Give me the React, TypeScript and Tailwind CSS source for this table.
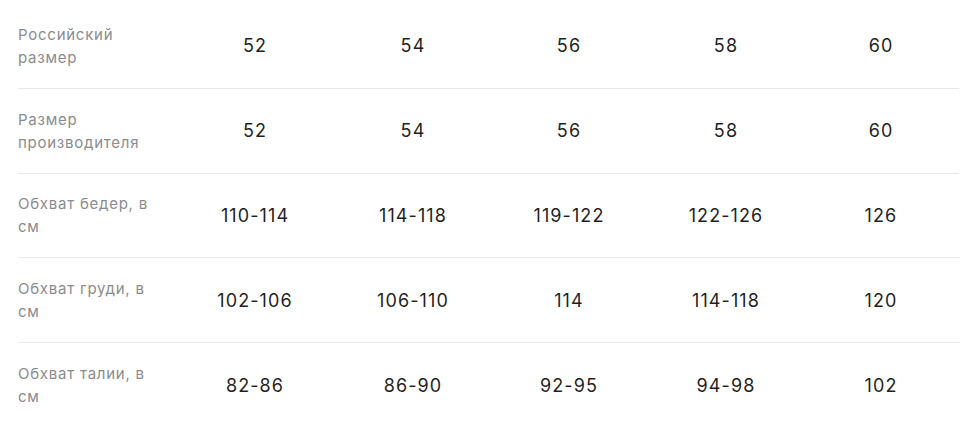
const rows: { label: string; values: string[] }[] = [
    { label: 'Российский размер', values: ['52', '54', '56', '58', '60'] },
    { label: 'Размер производителя', values: ['52', '54', '56', '58', '60'] },
    { label: 'Обхват бедер, в см', values: ['110-114', '114-118', '119-122', '122-126', '126'] },
    { label: 'Обхват груди, в см', values: ['102-106', '106-110', '114', '114-118', '120'] },
    { label: 'Обхват талии, в см', values: ['82-86', '86-90', '92-95', '94-98', '102'] },
];

export default function App() {
    return (
        <div className="w-[960px] h-[434px] bg-white pl-[18px] pr-[1px] pt-1 font-['Inter',sans-serif]">
            {rows.map((row, i) => (
                <div
                    key={row.label}
                    className={`grid grid-cols-[160px_154px_162px_150px_164px_146px] items-center h-[84.75px] ${
                        i < rows.length - 1 ? 'border-b border-[#e8e8e8]' : ''
                    }`}
                >
                    <div className="pr-[8px] text-[15px] leading-[23px] tracking-[0.75px] text-[#8b8b8f]">
                        {row.label}
                    </div>
                    {row.values.map((v, j) => (
                        <div key={j} className="text-center text-[18px] tracking-[1.1px] text-[#1f1f1f]">
                            {v}
                        </div>
                    ))}
                </div>
            ))}
        </div>
    );
}
